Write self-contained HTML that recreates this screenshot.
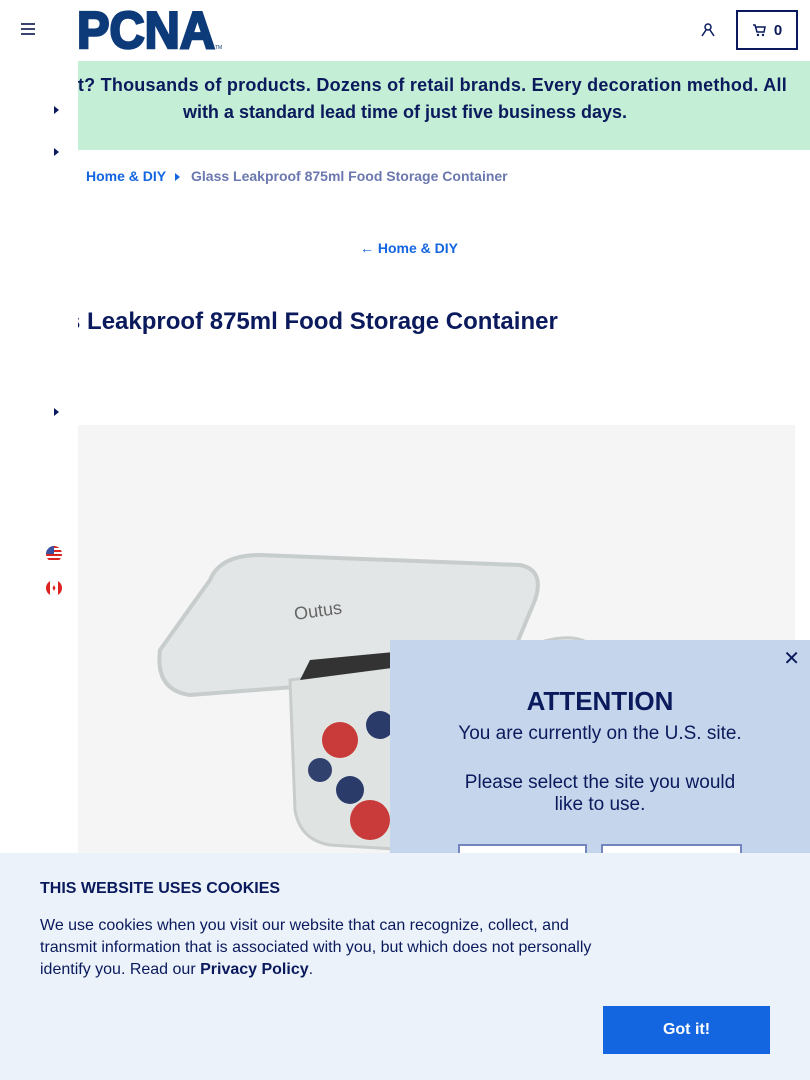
<!DOCTYPE html>
<html><head><meta charset="utf-8"><style>
*{margin:0;padding:0;box-sizing:border-box}
body{width:810px;height:1080px;overflow:hidden;position:relative;background:#fff;font-family:"Liberation Sans",sans-serif;color:#0a1a5c}
.abs{position:absolute}
</style></head><body>
<div class="abs" style="left:21px;top:23px;width:14px">
<div style="height:2px;background:#3a4470;margin-bottom:3px"></div><div style="height:2px;background:#3a4470;margin-bottom:3px"></div><div style="height:2px;background:#3a4470"></div></div>
<svg class="abs" style="left:0;top:0" width="230" height="60"><text x="77" y="48" textLength="138" lengthAdjust="spacingAndGlyphs" font-family="Liberation Sans" font-weight="bold" font-size="52" fill="#0d3a78" stroke="#0d3a78" stroke-width="2.5">PCNA</text><text x="215" y="49" font-size="5" fill="#0d3a78" font-family="Liberation Sans">TM</text></svg>
<svg class="abs" style="left:700px;top:22px" width="16" height="16" viewBox="0 0 16 16"><circle cx="8" cy="5" r="3" fill="none" stroke="#0a1a5c" stroke-width="1.5"/><path d="M2 14 L6 8 M14 14 L10 8" stroke="#0a1a5c" stroke-width="1.5"/></svg>
<div class="abs" style="left:736px;top:10px;width:62px;height:40px;border:2px solid #0a1a5c;display:flex;align-items:center;justify-content:center;font-weight:bold;font-size:15px;gap:8px">
<svg width="14" height="13" viewBox="0 0 14 13"><path d="M1 1h2l2 7h7l1-5H4" fill="none" stroke="#0a1a5c" stroke-width="1.5"/><circle cx="6" cy="11" r="1.2" fill="#0a1a5c"/><circle cx="11" cy="11" r="1.2" fill="#0a1a5c"/></svg>0</div>
<div class="abs" style="left:78px;top:61px;width:732px;height:89px;background:#c4eed5;overflow:hidden;font-weight:bold;font-size:18px;line-height:27px;color:#0a1a5c;white-space:nowrap">
<div style="position:absolute;right:23px;top:11px;letter-spacing:0.25px">Wait? Thousands of products. Dozens of retail brands. Every decoration method. All</div>
<div style="position:absolute;left:-123px;top:38px;width:900px;text-align:center">with a standard lead time of just five business days.</div></div>
<div class="abs" style="left:54px;top:106px;border-left:5px solid #0a1a5c;border-top:4px solid transparent;border-bottom:4px solid transparent"></div>
<div class="abs" style="left:54px;top:148px;border-left:5px solid #0a1a5c;border-top:4px solid transparent;border-bottom:4px solid transparent"></div>
<div class="abs" style="left:54px;top:408px;border-left:5px solid #0a1a5c;border-top:4px solid transparent;border-bottom:4px solid transparent"></div>
<div class="abs" style="left:86px;top:168px;font-size:14px;font-weight:bold;color:#1466e0">Home &amp; DIY</div>
<div class="abs" style="left:175px;top:173px;border-left:5px solid #1466e0;border-top:4px solid transparent;border-bottom:4px solid transparent"></div>
<div class="abs" style="left:191px;top:168px;font-size:14px;font-weight:bold;color:#6b78b0">Glass Leakproof 875ml Food Storage Container</div>
<div class="abs" style="left:360px;top:240px;font-size:14px;font-weight:bold;color:#1466e0">← Home &amp; DIY</div>
<div class="abs" style="left:78px;top:308px;width:600px;overflow:hidden;height:34px"><div style="margin-left:-63px;font-size:24px;font-weight:bold;white-space:nowrap">Glass Leakproof 875ml Food Storage Container</div></div>
<div class="abs" style="left:78px;top:425px;width:717px;height:655px;background:#f5f5f5"></div>
<svg class="abs" style="left:150px;top:540px" width="480" height="320" viewBox="0 0 480 320">
<path d="M10 110 L60 40 Q70 15 110 15 L370 25 Q395 30 385 60 L360 120 Q340 140 300 135 L40 155 Q5 150 10 110Z" fill="#e3e6e6" stroke="#c7cccc" stroke-width="4"/>
<path d="M140 140 L370 110 Q460 70 460 160 L440 260 Q420 310 260 310 L180 305 Q150 300 145 270Z" fill="#dfe3e2" stroke="#c8cdcc" stroke-width="3"/>
<circle cx="190" cy="200" r="18" fill="#c93a3a"/><circle cx="230" cy="185" r="14" fill="#2a3b6a"/><circle cx="260" cy="230" r="20" fill="#d94a3a"/><circle cx="200" cy="250" r="14" fill="#2a3b6a"/><circle cx="220" cy="280" r="20" fill="#c93a3a"/><circle cx="290" cy="200" r="12" fill="#2a3b6a"/><circle cx="170" cy="230" r="12" fill="#31416e"/>
<path d="M150 140 L160 120 L370 100 L380 110Z" fill="#333"/>
<text x="145" y="80" font-family="Liberation Sans" font-size="18" fill="#666" transform="rotate(-8 145 80)">Outus</text>
</svg>
<svg class="abs" style="left:46px;top:546px" width="16" height="16" viewBox="0 0 16 16"><defs><clipPath id="c"><circle cx="8" cy="8" r="8"/></clipPath></defs><g clip-path="url(#c)"><rect width="16" height="16" fill="#fff"/><rect y="0" width="16" height="2" fill="#d22"/><rect y="4" width="16" height="2" fill="#d22"/><rect y="8" width="16" height="2" fill="#d22"/><rect y="12" width="16" height="2" fill="#d22"/><rect width="8" height="8" fill="#3a52a0"/></g></svg>
<svg class="abs" style="left:46px;top:580px" width="16" height="16" viewBox="0 0 16 16"><defs><clipPath id="d"><circle cx="8" cy="8" r="8"/></clipPath></defs><g clip-path="url(#d)"><rect width="16" height="16" fill="#fff"/><rect width="4" height="16" fill="#d22"/><rect x="12" width="4" height="16" fill="#d22"/><path d="M8 5l1.5 3 -1.5 3 -1.5 -3z" fill="#d22"/></g></svg>
<div class="abs" style="left:390px;top:640px;width:420px;height:220px;background:#c5d5eb;text-align:center">
<div style="position:absolute;right:10px;top:6px;font-size:20px">✕</div>
<div style="margin-top:46px;font-size:26px;font-weight:bold">ATTENTION</div>
<div style="font-size:19px;margin-top:6px">You are currently on the U.S. site.</div>
<div style="font-size:19px;margin-top:27px;line-height:22px;padding:0 60px">Please select the site you would like to use.</div>
<div style="position:absolute;left:68px;top:204px;width:129px;height:20px;border:2px solid #7285bd;background:#fff"></div>
<div style="position:absolute;left:211px;top:204px;width:141px;height:20px;border:2px solid #7285bd;background:#fff"></div>
</div>
<div class="abs" style="left:0;top:853px;width:810px;height:227px;background:#ebf2fa">
<div style="position:absolute;left:40px;top:27px;font-size:16px;font-weight:bold">THIS WEBSITE USES COOKIES</div>
<div style="position:absolute;left:40px;top:62px;width:570px;font-size:16px;line-height:22px">We use cookies when you visit our website that can recognize, collect, and transmit information that is associated with you, but which does not personally identify you. Read our <b>Privacy Policy</b>.</div>
<div style="position:absolute;left:603px;top:153px;width:167px;height:48px;background:#1466e0;color:#fff;font-weight:bold;font-size:16px;display:flex;align-items:center;justify-content:center">Got it!</div>
</div>
</body></html>
